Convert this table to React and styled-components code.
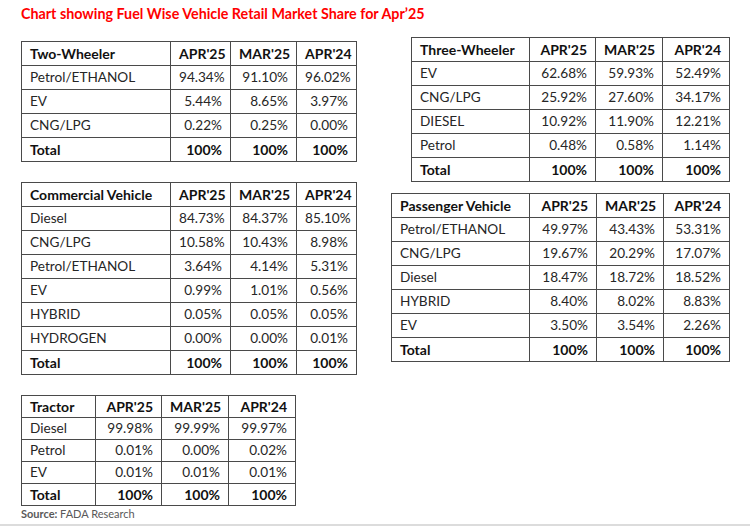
import React from 'react';
import styled, { createGlobalStyle } from 'styled-components';

const GlobalStyle = createGlobalStyle`
  html, body {
    margin: 0;
    padding: 0;
    background: #fff;
  }
  body {
    font-family: Lato, "Liberation Sans", Arial, sans-serif;
    color: #1a1a1a;
  }
`;

const Page = styled.div`
  width: 750px;
  height: 526px;
  box-sizing: border-box;
  padding: 0 20px 0 21px;
  border-bottom: 2px solid #dcdcdc;
  overflow: hidden;
`;

const Title = styled.h1`
  margin: 0;
  padding-top: 5px;
  height: 32px;
  box-sizing: border-box;
  font-size: 14.3px;
  line-height: 18px;
  font-weight: 700;
  color: #ff0000;
`;

const Columns = styled.div`
  display: flex;
  justify-content: space-between;
  align-items: flex-start;
`;

const LeftCol = styled.div`
  display: flex;
  flex-direction: column;
  gap: 20px;
  padding-top: 9px;
`;

const RightCol = styled.div`
  display: flex;
  flex-direction: column;
  align-items: flex-end;
  gap: 11px;
  padding-top: 5px;
`;

const Table = styled.table`
  border-collapse: collapse;
  table-layout: fixed;
  width: ${p => p.$width}px;
  border: 1px solid #000;
`;

const ColW = styled.col`
  width: ${p => p.$w}px;
`;

const Row = styled.tr`
  height: ${p => p.$h}px;
`;

const Cell = styled.td`
  padding: 0 8px;
  border: 1px solid #4a4a4a;
  text-align: ${p => (p.$first ? 'left' : 'right')};
  font-size: ${p => (p.$bold ? '14px' : '13.6px')};
  font-weight: ${p => (p.$bold ? 700 : 400)};
  white-space: nowrap;
  vertical-align: middle;
  line-height: 1;
  color: ${p => (p.$bold ? '#111' : '#262626')};
`;

const SourceNote = styled.div`
  margin-top: -19px;
  font-size: 11px;
  line-height: 14px;
  font-weight: 700;
  color: #595959;

  span {
    font-weight: 400;
  }
`;

const MONTHS = ["APR'25", "MAR'25", "APR'24"];

function MarketTable({ name, widths, rowH, rows }) {
  const total = widths.reduce((a, b) => a + b, 0);
  return (
    <Table $width={total}>
      <colgroup>
        {widths.map((w, i) => (
          <ColW key={i} $w={w} />
        ))}
      </colgroup>
      <tbody>
        <Row $h={rowH}>
          <Cell $first $bold>{name}</Cell>
          {MONTHS.map(m => (
            <Cell key={m} $bold>{m}</Cell>
          ))}
        </Row>
        {rows.map(([label, ...vals]) => (
          <Row key={label} $h={rowH}>
            <Cell $first>{label}</Cell>
            {vals.map((v, i) => (
              <Cell key={i}>{v}</Cell>
            ))}
          </Row>
        ))}
        <Row $h={rowH}>
          <Cell $first $bold>Total</Cell>
          <Cell $bold>100%</Cell>
          <Cell $bold>100%</Cell>
          <Cell $bold>100%</Cell>
        </Row>
      </tbody>
    </Table>
  );
}

const twoWheeler = [
  ['Petrol/ETHANOL', '94.34%', '91.10%', '96.02%'],
  ['EV', '5.44%', '8.65%', '3.97%'],
  ['CNG/LPG', '0.22%', '0.25%', '0.00%'],
];

const commercial = [
  ['Diesel', '84.73%', '84.37%', '85.10%'],
  ['CNG/LPG', '10.58%', '10.43%', '8.98%'],
  ['Petrol/ETHANOL', '3.64%', '4.14%', '5.31%'],
  ['EV', '0.99%', '1.01%', '0.56%'],
  ['HYBRID', '0.05%', '0.05%', '0.05%'],
  ['HYDROGEN', '0.00%', '0.00%', '0.01%'],
];

const tractor = [
  ['Diesel', '99.98%', '99.99%', '99.97%'],
  ['Petrol', '0.01%', '0.00%', '0.02%'],
  ['EV', '0.01%', '0.01%', '0.01%'],
];

const threeWheeler = [
  ['EV', '62.68%', '59.93%', '52.49%'],
  ['CNG/LPG', '25.92%', '27.60%', '34.17%'],
  ['DIESEL', '10.92%', '11.90%', '12.21%'],
  ['Petrol', '0.48%', '0.58%', '1.14%'],
];

const passenger = [
  ['Petrol/ETHANOL', '49.97%', '43.43%', '53.31%'],
  ['CNG/LPG', '19.67%', '20.29%', '17.07%'],
  ['Diesel', '18.47%', '18.72%', '18.52%'],
  ['HYBRID', '8.40%', '8.02%', '8.83%'],
  ['EV', '3.50%', '3.54%', '2.26%'],
];

export default function App() {
  return (
    <>
      <GlobalStyle />
      <Page>
        <Title>Chart showing Fuel Wise Vehicle Retail Market Share for Apr’25</Title>
        <Columns>
          <LeftCol>
            <MarketTable name="Two-Wheeler" widths={[149, 60, 66, 60]} rowH={24} rows={twoWheeler} />
            <MarketTable name="Commercial Vehicle" widths={[149, 60, 66, 60]} rowH={24} rows={commercial} />
            <MarketTable name="Tractor" widths={[74, 66, 67, 67]} rowH={22} rows={tractor} />
            <SourceNote>
              Source: <span>FADA Research</span>
            </SourceNote>
          </LeftCol>
          <RightCol>
            <MarketTable name="Three-Wheeler" widths={[118, 66, 67, 67]} rowH={24} rows={threeWheeler} />
            <MarketTable name="Passenger Vehicle" widths={[138, 67, 67, 66]} rowH={24} rows={passenger} />
          </RightCol>
        </Columns>
      </Page>
    </>
  );
}
